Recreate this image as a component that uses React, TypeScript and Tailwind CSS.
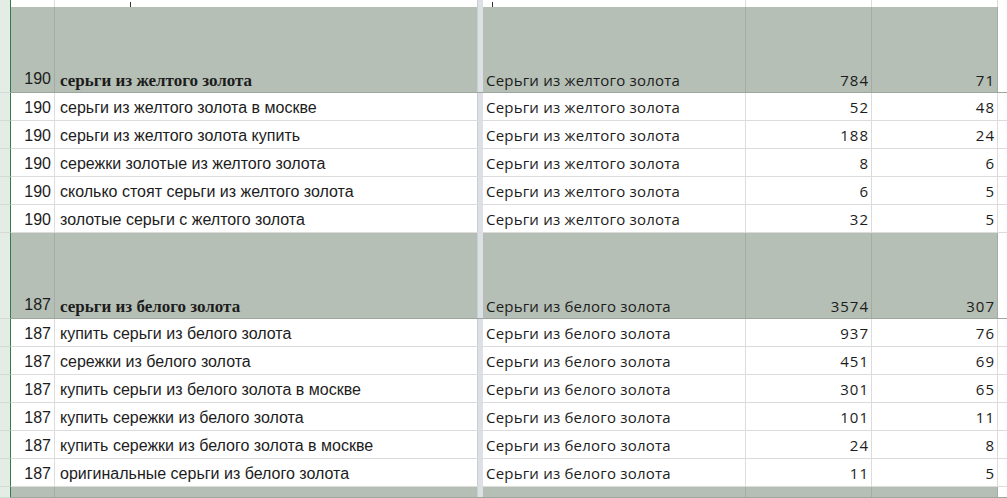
import React from "react";

type RowKind = "top" | "band" | "row" | "tail";

interface RowProps {
  kind: RowKind;
  a?: string;
  b?: string;
  c?: string;
  d?: string;
  e?: string;
}

const sans = "font-['Liberation_Sans',Arial,sans-serif]";
const serif = "font-['Liberation_Serif','Times_New_Roman',serif]";
const calib = "font-['Open_Sans','Noto_Sans',sans-serif]";

function Row({ kind, a, b, c, d, e }: RowProps) {
  const isBand = kind === "band" || kind === "tail";
  const h =
    kind === "top" ? "h-[7px]" : kind === "band" ? "h-[86px]" : kind === "tail" ? "h-[11px]" : "h-[28px]";
  const bg = isBand ? "bg-[#b5bfb5]" : "bg-white";
  const rowBorder = kind === "top" ? "" : isBand ? "border-b border-[#9ea79e]" : "border-b border-[#dcdcdc]";
  const vline = isBand ? "border-r border-[#a3ada3]" : "border-r border-[#dcdcdc]";
  const align = isBand ? "items-end pb-[1px]" : "items-center pt-[2px]";

  return (
    <div className={`flex ${h} overflow-hidden`}>
      <div className={`w-[11px] shrink-0 bg-[#e3ede6] border-r border-[#2f7d4a] ${kind === "top" ? "" : "border-b border-b-[#d2dbd4]"}`} />
      <div className={`flex flex-1 ${bg} ${rowBorder}`}>
        <div className={`w-[44px] shrink-0 flex justify-end ${align} pr-[3px] ${vline} ${sans} text-[16px] text-[#1c1c1c]`}>
          {a}
        </div>
        <div
          className={`w-[422px] shrink-0 flex ${align} pl-[5px] ${
            kind === "band" ? `${serif} font-bold text-[17px] leading-[20px]` : `${sans} text-[16px]`
          } text-[#1c1c1c] whitespace-nowrap`}
        >
          {kind === "top" ? <span className="ml-[70px] w-[1px] h-[5px] bg-[#333] self-start" /> : b}
        </div>
        <div className="w-[6px] shrink-0 bg-[#dde1e6] border-l border-[#c9ced4]" />
        <div className={`w-[263px] shrink-0 flex ${align} pl-[3px] ${vline} ${calib} text-[15px] tracking-[0.2px] text-[#1c1c1c] whitespace-nowrap`}>
          {kind === "top" ? <span className="ml-[6px] w-[1px] h-[5px] bg-[#333] self-start" /> : c}
        </div>
        <div className={`w-[126px] shrink-0 flex justify-end ${align} pr-[2px] ${vline} ${calib} text-[15px] tracking-[1px] text-[#1c1c1c]`}>
          {d}
        </div>
        <div className={`w-[126px] shrink-0 flex justify-end ${align} pr-[2px] ${vline} ${calib} text-[15px] tracking-[1px] text-[#1c1c1c]`}>
          {e}
        </div>
        <div className={`flex-1 ${isBand ? "bg-white" : ""}`} />
      </div>
    </div>
  );
}

const group1 = {
  n: "190",
  head: "серьги из желтого золота",
  c: "Серьги из желтого золота",
  d: "784",
  e: "71",
  rows: [
    ["серьги из желтого золота в москве", "52", "48"],
    ["серьги из желтого золота купить", "188", "24"],
    ["сережки золотые из желтого золота", "8", "6"],
    ["сколько стоят серьги из желтого золота", "6", "5"],
    ["золотые серьги с желтого золота", "32", "5"],
  ],
};

const group2 = {
  n: "187",
  head: "серьги из белого золота",
  c: "Серьги из белого золота",
  d: "3574",
  e: "307",
  rows: [
    ["купить серьги из белого золота", "937", "76"],
    ["сережки из белого золота", "451", "69"],
    ["купить серьги из белого золота в москве", "301", "65"],
    ["купить сережки из белого золота", "101", "11"],
    ["купить сережки из белого золота в москве", "24", "8"],
    ["оригинальные серьги из белого золота", "11", "5"],
  ],
};

export default function App() {
  const groups = [group1, group2];
  return (
    <div className="w-[1007px] h-[498px] overflow-hidden bg-white">
      <Row kind="top" />
      {groups.map((g) => (
        <React.Fragment key={g.n}>
          <Row kind="band" a={g.n} b={g.head} c={g.c} d={g.d} e={g.e} />
          {g.rows.map((r, i) => (
            <Row key={i} kind="row" a={g.n} b={r[0]} c={g.c} d={r[1]} e={r[2]} />
          ))}
        </React.Fragment>
      ))}
      <Row kind="tail" />
    </div>
  );
}
